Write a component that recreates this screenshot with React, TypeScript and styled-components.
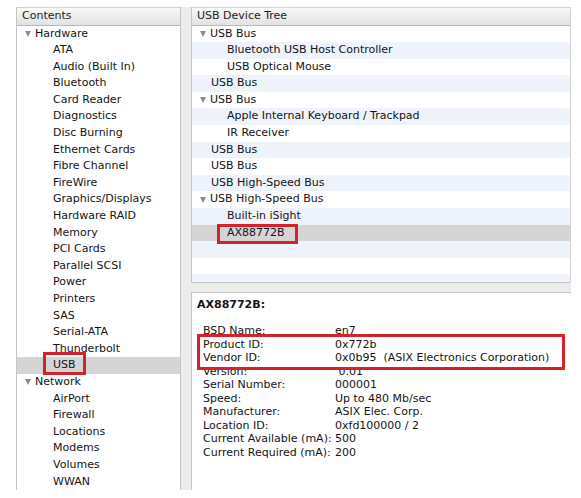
import styled, { createGlobalStyle } from "styled-components";

const GlobalStyle = createGlobalStyle`
  html, body {
    margin: 0;
    background: #fff;
  }
  body {
    font-family: "DejaVu Sans", "Liberation Sans", sans-serif;
    font-size: 11px;
    color: #141414;
  }
`;

const Window = styled.div`
  margin: 7px 0 0 16px;
  width: 555px;
  height: 483px;
  display: flex;
  gap: 10px;
  background: #ececec;
`;

const Pane = styled.div`
  background: #fff;
  border-left: 1px solid #c4c4c4;
  overflow: hidden;
  box-sizing: border-box;
`;

const SidePane = styled(Pane)`
  width: 165px;
  flex: none;
  border-right: 1px solid #c4c4c4;
`;

const RightColumn = styled.div`
  flex: 1;
  display: flex;
  flex-direction: column;
  gap: 9px;
`;

const TreePane = styled(Pane)`
  height: 276px;
  flex: none;
  border-right: 1px solid #d2d2d2;
  border-bottom: 1px solid #c4c4c4;
`;

const InfoPane = styled(Pane)`
  flex: 1;
  border-top: 1px solid #c4c4c4;
  padding: 5px 0 0 5px;
`;

const Header = styled.div`
  height: 18.5px;
  box-sizing: border-box;
  border-top: 1px solid #d4d4d4;
  border-bottom: 1px solid #b8b8b8;
  background: linear-gradient(#f8f8f8, #e2e2e2);
  padding-left: 5px;
  line-height: 16.5px;
  color: #222;
`;

const Row = styled.div<{ $indent: number; $striped?: boolean; $selected?: boolean }>`
  height: 16.6px;
  line-height: 16.6px;
  display: flex;
  align-items: center;
  gap: 4px;
  padding-left: ${(p) => p.$indent}px;
  white-space: nowrap;
  background: ${(p) => (p.$selected ? "#d5d5d5" : p.$striped ? "#eef3fc" : "#fff")};
`;

const Disclosure = styled.span`
  width: 0;
  height: 0;
  border-left: 3.5px solid transparent;
  border-right: 3.5px solid transparent;
  border-top: 6px solid #8a8a8a;
`;

const Marked = styled.span<{ $top: number; $right: number; $bottom: number; $left: number }>`
  position: relative;
  &::after {
    content: "";
    position: absolute;
    top: ${(p) => p.$top}px;
    right: ${(p) => p.$right}px;
    bottom: ${(p) => p.$bottom}px;
    left: ${(p) => p.$left}px;
    border: 3px solid #d2232c;
  }
`;

const Title = styled.div`
  font-weight: bold;
  line-height: 14px;
`;

const DetailList = styled.div`
  margin-top: 12px;
  padding-left: 6px;
`;

const DetailRow = styled.div`
  display: grid;
  grid-template-columns: 132px auto;
  height: 13.55px;
  line-height: 13.55px;
  white-space: pre;
`;

const MarkedGroup = styled.div`
  position: relative;
  &::after {
    content: "";
    position: absolute;
    top: -4px;
    left: -6px;
    right: 6px;
    bottom: -5px;
    border: 3px solid #d2232c;
  }
`;

type Item = { label: string; depth: 0 | 1; open?: boolean; selected?: boolean; marked?: boolean };

const contents: Item[] = [
  { label: "Hardware", depth: 0, open: true },
  ...[
    "ATA",
    "Audio (Built In)",
    "Bluetooth",
    "Card Reader",
    "Diagnostics",
    "Disc Burning",
    "Ethernet Cards",
    "Fibre Channel",
    "FireWire",
    "Graphics/Displays",
    "Hardware RAID",
    "Memory",
    "PCI Cards",
    "Parallel SCSI",
    "Power",
    "Printers",
    "SAS",
    "Serial-ATA",
    "Thunderbolt",
  ].map((label) => ({ label, depth: 1 as const })),
  { label: "USB", depth: 1, selected: true, marked: true },
  { label: "Network", depth: 0, open: true },
  ...["AirPort", "Firewall", "Locations", "Modems", "Volumes", "WWAN"].map((label) => ({
    label,
    depth: 1 as const,
  })),
];

const devices: Item[] = [
  { label: "USB Bus", depth: 0, open: true },
  { label: "Bluetooth USB Host Controller", depth: 1 },
  { label: "USB Optical Mouse", depth: 1 },
  { label: "USB Bus", depth: 0 },
  { label: "USB Bus", depth: 0, open: true },
  { label: "Apple Internal Keyboard / Trackpad", depth: 1 },
  { label: "IR Receiver", depth: 1 },
  { label: "USB Bus", depth: 0 },
  { label: "USB Bus", depth: 0 },
  { label: "USB High-Speed Bus", depth: 0 },
  { label: "USB High-Speed Bus", depth: 0, open: true },
  { label: "Built-in iSight", depth: 1 },
  { label: "AX88772B", depth: 1, selected: true, marked: true },
];

const details: [string, string][] = [
  ["BSD Name:", "en7"],
  ["Product ID:", "0x772b"],
  ["Vendor ID:", "0x0b95  (ASIX Electronics Corporation)"],
  ["Version:", " 0.01"],
  ["Serial Number:", "000001"],
  ["Speed:", "Up to 480 Mb/sec"],
  ["Manufacturer:", "ASIX Elec. Corp."],
  ["Location ID:", "0xfd100000 / 2"],
  ["Current Available (mA):", "500"],
  ["Current Required (mA):", "200"],
];

function indentFor(item: Item, childIndent: number) {
  if (item.depth === 1) return childIndent;
  return item.open ? 8 : 19;
}

function TreeRow({ item, childIndent, striped, markBox }: {
  item: Item;
  childIndent: number;
  striped?: boolean;
  markBox: [number, number, number, number];
}) {
  return (
    <Row $indent={indentFor(item, childIndent)} $striped={striped} $selected={item.selected}>
      {item.open && <Disclosure />}
      {item.marked ? (
        <Marked $top={markBox[0]} $right={markBox[1]} $bottom={markBox[2]} $left={markBox[3]}>
          {item.label}
        </Marked>
      ) : (
        item.label
      )}
    </Row>
  );
}

function Detail({ label, value }: { label: string; value: string }) {
  return (
    <DetailRow>
      <span>{label}</span>
      <span>{value}</span>
    </DetailRow>
  );
}

export default function App() {
  const treeRows: (Item | null)[] = [...devices, null, null, null];
  return (
    <>
      <GlobalStyle />
      <Window>
        <SidePane>
          <Header>Contents</Header>
          {contents.map((item, i) => (
            <TreeRow key={i} item={item} childIndent={36} markBox={[-5, -10, -1, -10]} />
          ))}
        </SidePane>
        <RightColumn>
          <TreePane>
            <Header>USB Device Tree</Header>
            {treeRows.map((item, i) =>
              item ? (
                <TreeRow
                  key={i}
                  item={item}
                  childIndent={35}
                  striped={i % 2 === 1}
                  markBox={[-1, -13, -3, -10]}
                />
              ) : (
                <Row key={i} $indent={0} $striped={i % 2 === 1} />
              )
            )}
          </TreePane>
          <InfoPane>
            <Title>AX88772B:</Title>
            <DetailList>
              <Detail label={details[0][0]} value={details[0][1]} />
              <MarkedGroup>
                {details.slice(1, 3).map(([k, v]) => (
                  <Detail key={k} label={k} value={v} />
                ))}
              </MarkedGroup>
              {details.slice(3).map(([k, v]) => (
                <Detail key={k} label={k} value={v} />
              ))}
            </DetailList>
          </InfoPane>
        </RightColumn>
      </Window>
    </>
  );
}
